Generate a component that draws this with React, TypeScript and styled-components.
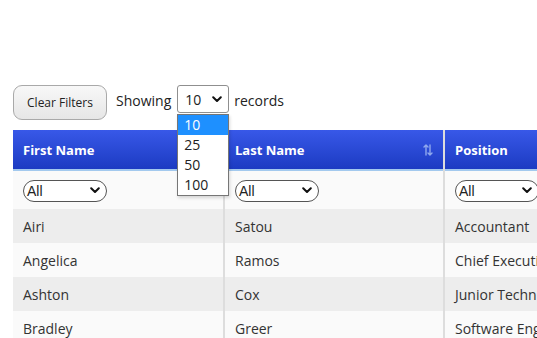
import React from "react";
import styled, { createGlobalStyle } from "styled-components";

const Global = createGlobalStyle`
  html, body { margin: 0; padding: 0; background: #fff; overflow: hidden; }
  body { font-family: "Open Sans", "Noto Sans", sans-serif; color: #222; }
`;

const Page = styled.div`
  padding: 85px 0 0 13px;
  width: 537px;
  box-sizing: border-box;
`;

const Toolbar = styled.div`
  display: flex;
  align-items: flex-start;
  gap: 5px;
  height: 45px;
`;

const ClearButton = styled.button`
  height: 35px;
  width: 94px;
  padding: 0;
  margin-right: 4px;
  border: 1px solid #a9a9a9;
  border-radius: 9px;
  background: linear-gradient(#f8f8f8, #e6e6e6);
  font-family: "Open Sans", sans-serif;
  font-size: 12px;
  color: #222;
`;

const Label = styled.span`
  font-size: 14px;
  line-height: 18px;
  margin-top: 7px;
  color: #222;
`;

const PageSizeWrap = styled.div`
  position: relative;
  margin-left: 1px;
`;

const PageSize = styled.div`
  width: 52px;
  height: 28px;
  box-sizing: border-box;
  border: 1px solid #8f8f8f;
  border-radius: 3px;
  display: flex;
  align-items: center;
  justify-content: space-between;
  padding: 0 6px 0 7px;
  font-size: 14px;
  background: #fff;
`;

const Menu = styled.ul`
  position: absolute;
  left: 0;
  top: 29px;
  width: 52px;
  margin: 0;
  padding: 0;
  list-style: none;
  box-sizing: border-box;
  border: 1px solid #767676;
  background: #fff;
  z-index: 5;
  box-shadow: 1px 2px 3px rgba(0,0,0,0.15);
`;

const MenuItem = styled.li<{ $selected?: boolean }>`
  height: 20px;
  line-height: 20px;
  padding-left: 6px;
  font-size: 14px;
  background: ${(p) => (p.$selected ? "#1e90ff" : "#fff")};
  color: ${(p) => (p.$selected ? "#fff" : "#222")};
`;

const Table = styled.div`
  display: grid;
  grid-template-columns: 210px 218px 200px;
  column-gap: 2px;
  background: #ddd;
  width: 630px;
`;

const HeadCell = styled.div`
  height: 41px;
  box-sizing: border-box;
  background: linear-gradient(#3858e8, #1c3bc2);
  border-bottom: 2px solid #a3c9ee;
  color: #fff;
  font-weight: 700;
  font-size: 13px;
  display: flex;
  align-items: center;
  justify-content: space-between;
  padding: 1px 10px 0;
`;

const FilterCell = styled.div`
  height: 38px;
  background: #fafafa;
  display: flex;
  align-items: center;
  padding: 1px 10px 0;
  box-sizing: border-box;
`;

const FilterSelect = styled.div`
  width: 84px;
  height: 22px;
  box-sizing: border-box;
  border: 1px solid #555;
  border-radius: 11px;
  display: flex;
  align-items: center;
  justify-content: space-between;
  padding: 0 6px 0 3px;
  font-family: "Liberation Sans", Arial, sans-serif;
  font-size: 14px;
  background: #fff;
`;

const Cell = styled.div<{ $odd: boolean }>`
  height: 34px;
  background: ${(p) => (p.$odd ? "#ededed" : "#fafafa")};
  display: flex;
  align-items: center;
  padding: 0 10px;
  font-size: 14px;
  color: #333;
  white-space: nowrap;
  overflow: hidden;
`;

const Chevron = () => (
  <svg width="10" height="7" viewBox="0 0 10 7">
    <path d="M1.2 1.2 L5 5 L8.8 1.2" fill="none" stroke="#111" strokeWidth="2" strokeLinecap="round" strokeLinejoin="round" />
  </svg>
);

const SortIcon = () => (
  <svg width="10" height="12" viewBox="0 0 10 12">
    <g stroke="#8fa8ee" strokeWidth="1.4" fill="none" strokeLinecap="round">
      <path d="M3 11 V1 M1 3 L3 1 L5 3" />
      <path d="M7 1 V11 M5 9 L7 11 L9 9" />
    </g>
  </svg>
);

const rows = [
  ["Airi", "Satou", "Accountant"],
  ["Angelica", "Ramos", "Chief Executive Officer (CEO)"],
  ["Ashton", "Cox", "Junior Technical Author"],
  ["Bradley", "Greer", "Software Engineer"],
];

export default function App() {
  return (
    <Page>
      <Global />
      <Toolbar>
        <ClearButton>Clear Filters</ClearButton>
        <Label>Showing</Label>
        <PageSizeWrap>
          <PageSize>
            <span>10</span>
            <Chevron />
          </PageSize>
          <Menu>
            <MenuItem $selected>10</MenuItem>
            <MenuItem>25</MenuItem>
            <MenuItem>50</MenuItem>
            <MenuItem>100</MenuItem>
          </Menu>
        </PageSizeWrap>
        <Label>records</Label>
      </Toolbar>
      <Table>
        <HeadCell>First Name</HeadCell>
        <HeadCell>
          Last Name <SortIcon />
        </HeadCell>
        <HeadCell>Position</HeadCell>
        {[0, 1, 2].map((i) => (
          <FilterCell key={i}>
            <FilterSelect>
              <span>All</span>
              <Chevron />
            </FilterSelect>
          </FilterCell>
        ))}
        {rows.map((r, ri) =>
          r.map((c, ci) => (
            <Cell key={`${ri}-${ci}`} $odd={ri % 2 === 0}>
              {c}
            </Cell>
          ))
        )}
      </Table>
    </Page>
  );
}
